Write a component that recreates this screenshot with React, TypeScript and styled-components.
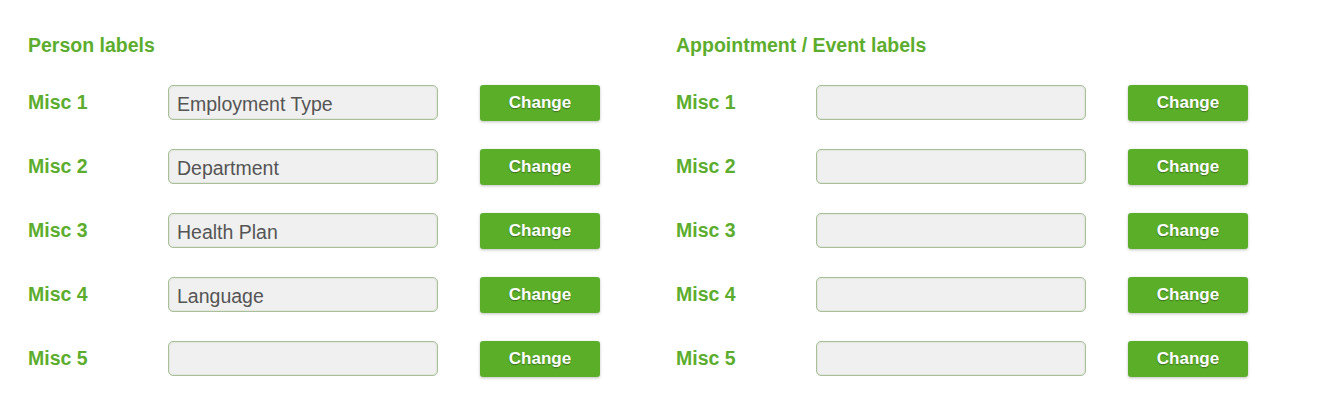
import React from 'react'
import styled, { createGlobalStyle } from 'styled-components'

const GlobalStyle = createGlobalStyle`
  body {
    margin: 0;
    background: #ffffff;
    font-family: "Liberation Sans", Arial, sans-serif;
  }
`

const Page = styled.div`
  display: flex;
  padding: 33px 0 0 28px;
`

const Column = styled.section`
  width: 648px;
  display: flex;
  flex-direction: column;
`

const Heading = styled.h2`
  margin: 0 0 28px;
  font-size: 19.5px;
  line-height: 24px;
  font-weight: bold;
  color: #5cad2d;
`

const Row = styled.div`
  display: flex;
  align-items: flex-start;
  height: 36px;
  margin-bottom: 28px;
`

const Label = styled.label`
  width: 140px;
  font-size: 19.5px;
  line-height: 34px;
  font-weight: bold;
  color: #5cad2d;
`

const Input = styled.input`
  box-sizing: border-box;
  width: 270px;
  height: 35px;
  margin-right: 42px;
  padding: 4px 8px 0;
  border: 1px solid #a9bf99;
  border-radius: 5px;
  background: #f0f0f0;
  box-shadow: inset 0 0 2px rgba(120, 150, 100, 0.35);
  font-family: "Liberation Sans", Arial, sans-serif;
  font-size: 19.5px;
  color: #555555;
  outline: none;
`

const Button = styled.button`
  width: 120px;
  height: 36px;
  padding: 0;
  border: none;
  border-radius: 3px;
  background: #5aae28;
  box-shadow: 0 1px 3px rgba(0, 0, 0, 0.25);
  color: #ffffff;
  font-family: "Liberation Sans", Arial, sans-serif;
  font-size: 17px;
  font-weight: bold;
  text-shadow: 0 1px 1px rgba(0, 0, 0, 0.35);
  cursor: pointer;
`

const person = ['Employment Type', 'Department', 'Health Plan', 'Language', '']
const appointment = ['', '', '', '', '']

function LabelGroup({ title, values }: { title: string; values: string[] }) {
  return (
    <Column>
      <Heading>{title}</Heading>
      {values.map((v, i) => (
        <Row key={i}>
          <Label>Misc {i + 1}</Label>
          <Input defaultValue={v} />
          <Button>Change</Button>
        </Row>
      ))}
    </Column>
  )
}

export default function App() {
  return (
    <>
      <GlobalStyle />
      <Page>
        <LabelGroup title="Person labels" values={person} />
        <LabelGroup title="Appointment / Event labels" values={appointment} />
      </Page>
    </>
  )
}
